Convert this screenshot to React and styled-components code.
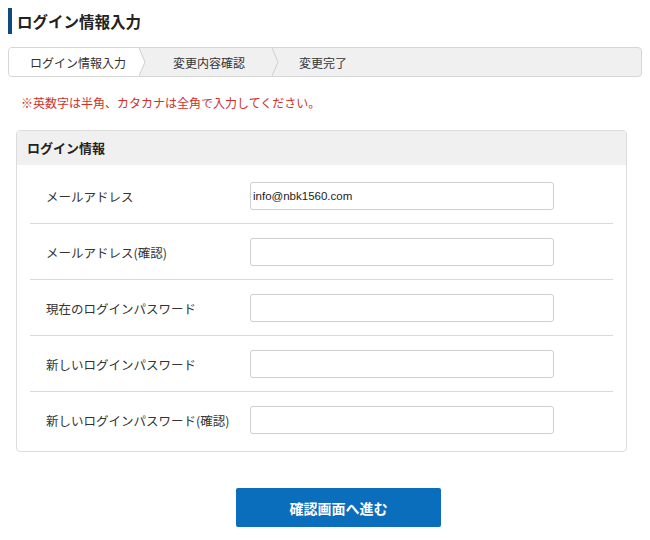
import React from 'react';
import styled, { createGlobalStyle } from 'styled-components';

const GlobalStyle = createGlobalStyle`
  body {
    margin: 0;
    background: #fff;
    font-family: 'Noto Sans CJK JP', 'Liberation Sans', sans-serif;
    color: #333;
  }
`;

const Page = styled.div`
  padding: 8px;
`;

const Title = styled.h1`
  margin: 0;
  height: 26px;
  line-height: 26px;
  border-left: 4px solid #114a80;
  padding-left: 5px;
  font-size: 15.5px;
  font-weight: bold;
  color: #222;
`;

const Steps = styled.div`
  display: flex;
  align-items: stretch;
  margin-top: 13px;
  height: 28px;
  border: 1px solid #d6d6d6;
  border-radius: 4px;
  background: #f0f0f0;
  overflow: hidden;
`;

const Step = styled.div`
  display: flex;
  align-items: center;
  padding: ${props => props.pad};
  background: ${props => (props.active ? '#fff' : '#f0f0f0')};
  font-size: 12px;
  color: #333;
  white-space: nowrap;
`;

const Chevron = ({ from }) => (
  <svg width="7" height="28" viewBox="0 0 7 28" style={{ flexShrink: 0, display: 'block' }}>
    <rect x="0" y="0" width="7" height="28" fill="#f0f0f0" />
    <polygon points="0,0 6,14 0,28" fill={from} />
    <polyline points="0,0 6,14 0,28" fill="none" stroke="#cfcfcf" strokeWidth="1" />
  </svg>
);

const Note = styled.p`
  margin: 17px 0 0 13px;
  line-height: 18px;
  font-size: 12px;
  color: #d0302a;
`;

const Panel = styled.section`
  box-sizing: border-box;
  width: 611px;
  margin: 18px 0 0 8px;
  border: 1px solid #dcdcdc;
  border-radius: 4px;
  overflow: hidden;
`;

const PanelHeader = styled.h2`
  margin: 0;
  height: 34px;
  line-height: 34px;
  padding-left: 10px;
  background: #f0f0f0;
  font-size: 13px;
  font-weight: bold;
  color: #222;
`;

const PanelBody = styled.div`
  padding: 3px 13px 4px;
`;

const Row = styled.div`
  display: flex;
  align-items: center;
  padding: 14px 0 13px;
  border-bottom: 1px solid #d9d9d9;

  &:last-child {
    border-bottom: none;
  }
`;

const Label = styled.label`
  box-sizing: border-box;
  width: 220px;
  padding-left: 16px;
  font-size: 12.5px;
  color: #333;
`;

const Input = styled.input`
  box-sizing: border-box;
  width: 304px;
  height: 28px;
  padding: 0 2px;
  border: 1px solid #cfcfcf;
  border-radius: 3px;
  font-family: 'Liberation Sans', Arial, sans-serif;
  font-size: 11.5px;
  color: #222;
  outline: none;
`;

const Actions = styled.div`
  display: flex;
  margin-top: 36px;
  padding-left: 228px;
`;

const SubmitButton = styled.button`
  width: 205px;
  height: 39px;
  border: none;
  border-radius: 2px;
  background: #0a6ebd;
  color: #fff;
  font-family: 'Noto Sans CJK JP', sans-serif;
  font-size: 14px;
  font-weight: bold;
  cursor: pointer;
`;

const fields = [
  { label: 'メールアドレス', value: 'info@nbk1560.com' },
  { label: 'メールアドレス(確認)', value: '' },
  { label: '現在のログインパスワード', value: '' },
  { label: '新しいログインパスワード', value: '' },
  { label: '新しいログインパスワード(確認)', value: '' },
];

export default function App() {
  return (
    <Page>
      <GlobalStyle />
      <Title>ログイン情報入力</Title>

      <Steps>
        <Step active pad="0 13px 0 21px">ログイン情報入力</Step>
        <Chevron from="#fff" />
        <Step pad="0 27px 0 27px">変更内容確認</Step>
        <Chevron from="#f0f0f0" />
        <Step pad="0 0 0 20px">変更完了</Step>
      </Steps>

      <Note>※英数字は半角、カタカナは全角で入力してください。</Note>

      <Panel>
        <PanelHeader>ログイン情報</PanelHeader>
        <PanelBody>
          {fields.map(f => (
            <Row key={f.label}>
              <Label>{f.label}</Label>
              <Input defaultValue={f.value} />
            </Row>
          ))}
        </PanelBody>
      </Panel>

      <Actions>
        <SubmitButton>確認画面へ進む</SubmitButton>
      </Actions>
    </Page>
  );
}
